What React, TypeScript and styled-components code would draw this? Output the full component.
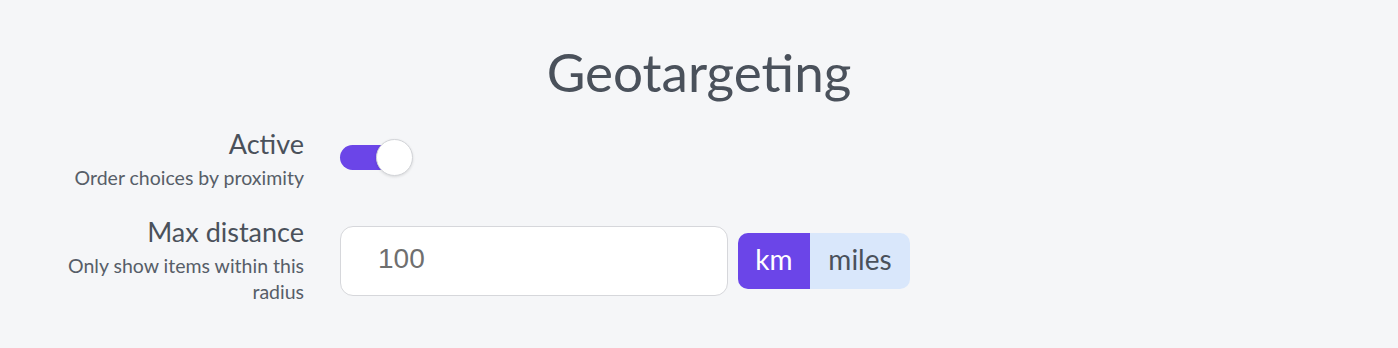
import React, { useState } from "react";
import styled, { createGlobalStyle } from "styled-components";

const GlobalStyle = createGlobalStyle`
  html, body {
    margin: 0;
    padding: 0;
    background: #f5f6f8;
  }
  body {
    font-family: "Lato", "Noto Sans", sans-serif;
    color: #464d57;
  }
`;

const Page = styled.div`
  width: 1398px;
  height: 348px;
  box-sizing: border-box;
  padding-top: 40px;
`;

const Title = styled.h1`
  margin: 0 0 23px;
  text-align: center;
  font-size: 53px;
  font-weight: 400;
  line-height: 64px;
  color: #4a515b;
`;

const Form = styled.div`
  display: grid;
  grid-template-columns: 240px auto;
  column-gap: 36px;
  row-gap: 24px;
  padding-left: 64px;
  align-items: start;
`;

const LabelBlock = styled.div`
  text-align: right;
`;

const LabelTitle = styled.div`
  font-size: 27px;
  line-height: 34px;
  margin-bottom: 4px;
  color: #4a515b;
`;

const LabelHint = styled.div`
  font-size: 19.5px;
  line-height: 26px;
  color: #575e68;
`;

const Control = styled.div`
  display: flex;
  align-items: center;
  gap: 10px;
  padding-top: 11px;
`;

const SwitchButton = styled.button<{ $on: boolean }>`
  position: relative;
  width: 74px;
  height: 38px;
  padding: 0;
  margin-top: 1px;
  border: none;
  background: transparent;
  cursor: pointer;

  &::before {
    content: "";
    position: absolute;
    left: 0;
    top: 6px;
    width: 62px;
    height: 25px;
    border-radius: 13px;
    background: ${(p) => (p.$on ? "#6b45e8" : "#c9cdd4")};
  }
`;

const Knob = styled.span<{ $on: boolean }>`
  position: absolute;
  top: 0;
  left: ${(p) => (p.$on ? "36px" : "0")};
  width: 35px;
  height: 35px;
  border-radius: 50%;
  background: #ffffff;
  border: 1px solid #d2d4d8;
  box-shadow: 0 1px 3px rgba(0, 0, 0, 0.12);
`;

const NumberInput = styled.input`
  width: 388px;
  height: 70px;
  box-sizing: border-box;
  padding: 0 0 4px 37px;
  border: 1px solid #d6d7db;
  border-radius: 13px;
  background: #ffffff;
  font-family: "Liberation Sans", Arial, sans-serif;
  font-size: 28px;
  color: #6f6f6f;
  outline: none;
`;

const Segmented = styled.div`
  display: flex;
  height: 56px;
  border-radius: 10px;
  overflow: hidden;
  background: #d9e7fb;
`;

const Segment = styled.button<{ $active: boolean; $width: number }>`
  width: ${(p) => p.$width}px;
  border: none;
  padding: 0 0 4px;
  font-family: "Lato", "Noto Sans", sans-serif;
  font-size: 28px;
  cursor: pointer;
  background: ${(p) => (p.$active ? "#6b45e8" : "transparent")};
  color: ${(p) => (p.$active ? "#ffffff" : "#4a515b")};
`;

export default function App() {
  const [active, setActive] = useState(true);
  const [distance, setDistance] = useState("100");
  const [unit, setUnit] = useState<"km" | "miles">("km");

  return (
    <>
      <GlobalStyle />
      <Page>
        <Title>Geotargeting</Title>
        <Form>
          <LabelBlock>
            <LabelTitle>Active</LabelTitle>
            <LabelHint>Order choices by proximity</LabelHint>
          </LabelBlock>
          <Control>
            <SwitchButton $on={active} onClick={() => setActive(!active)}>
              <Knob $on={active} />
            </SwitchButton>
          </Control>

          <LabelBlock>
            <LabelTitle>Max distance</LabelTitle>
            <LabelHint>Only show items within this radius</LabelHint>
          </LabelBlock>
          <Control>
            <NumberInput
              value={distance}
              onChange={(e) => setDistance(e.target.value)}
            />
            <Segmented>
              <Segment $active={unit === "km"} $width={72} onClick={() => setUnit("km")}>
                km
              </Segment>
              <Segment $active={unit === "miles"} $width={100} onClick={() => setUnit("miles")}>
                miles
              </Segment>
            </Segmented>
          </Control>
        </Form>
      </Page>
    </>
  );
}
